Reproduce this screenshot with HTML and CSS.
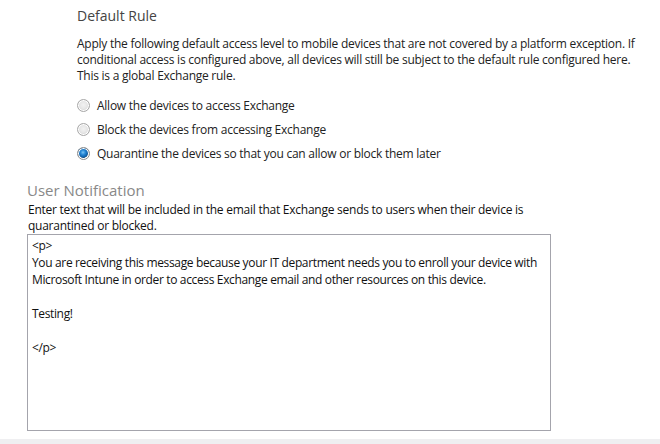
FILE: index.html
```html
<!DOCTYPE html>
<html>
<head>
<meta charset="utf-8">
<link rel="stylesheet" href="styles.css">
</head>
<body>
<div class="page">
  <section class="rule">
    <h2 class="rule-title">Default Rule</h2>
    <p class="rule-desc">Apply the following default access level to mobile devices that are not covered by a platform exception. If conditional access is configured above, all devices will still be subject to the default rule configured here. This is a global Exchange rule.</p>
    <div class="options">
      <label class="option"><span class="radio"></span>Allow the devices to access Exchange</label>
      <label class="option"><span class="radio"></span>Block the devices from accessing Exchange</label>
      <label class="option"><span class="radio checked"></span>Quarantine the devices so that you can allow or block them later</label>
    </div>
  </section>
  <section class="notify">
    <h2 class="notify-title">User Notification</h2>
    <p class="notify-desc">Enter text that will be included in the email that Exchange sends to users when their device is quarantined or blocked.</p>
    <div class="textbox">&lt;p&gt;<br>You are receiving this message because your IT department needs you to enroll your device with Microsoft Intune in order to access Exchange email and other resources on this device.<br><br>Testing!<br><br>&lt;/p&gt;</div>
  </section>
</div>
<div class="footer-strip"></div>
</body>
</html>
```
FILE: styles.css
```css
html, body {
  margin: 0;
  padding: 0;
  background: #ffffff;
}
body {
  font-family: "Open Sans", "Noto Sans", sans-serif;
  font-size: 12px;
  letter-spacing: -0.25px;
  color: #222;
  width: 660px;
  height: 444px;
  overflow: hidden;
  display: flex;
  flex-direction: column;
}
.page {
  flex: 1;
}
.rule {
  padding-left: 77px;
  width: 568px;
}
.rule-title {
  margin: 0;
  padding-top: 7px;
  font-size: 14px;
  font-weight: normal;
  color: #444;
  line-height: 18px;
  letter-spacing: 0;
}
.rule-desc {
  margin: 11px 0 0 0;
  line-height: 16px;
  color: #222;
}
.options {
  margin-top: 13px;
  display: flex;
  flex-direction: column;
  gap: 7px;
}
.option {
  display: flex;
  align-items: center;
  gap: 7px;
  line-height: 17px;
}
.radio {
  box-sizing: border-box;
  width: 13px;
  height: 13px;
  border-radius: 50%;
  border: 1px solid #a8a8a8;
  box-shadow: inset 0 0 0 1px #ffffff;
  background: radial-gradient(circle at 50% 45%, #f2f2f2 0, #e6e6e6 45%, #cfcfcf 75%, #d9d9d9 100%);
  flex: none;
}
.radio.checked {
  border-color: #8c8c8c;
  background: radial-gradient(circle at 45% 40%, #7cc4f2 0, #2a8ad8 25%, #0d5fa8 52%, #1f4f7c 60%, #ffffff 66%, #ffffff 100%);
}
.notify {
  padding-left: 27px;
  margin-top: 19px;
}
.notify-title {
  margin: 0;
  font-size: 15px;
  font-weight: normal;
  color: #888;
  line-height: 18px;
  letter-spacing: 0;
}
.notify-desc {
  margin: 3px 0 0 1px;
  width: 526px;
  line-height: 16px;
  color: #111;
}
.textbox {
  margin-top: 0;
  width: 514px;
  height: 191px;
  border: 1px solid #a4a4ac;
  padding: 2px 4px 2px 4px;
  line-height: 17px;
  letter-spacing: -0.35px;
  color: #111;
  background: #fff;
}
.footer-strip {
  height: 5px;
  background: #efeff1;
  flex: none;
}
```
